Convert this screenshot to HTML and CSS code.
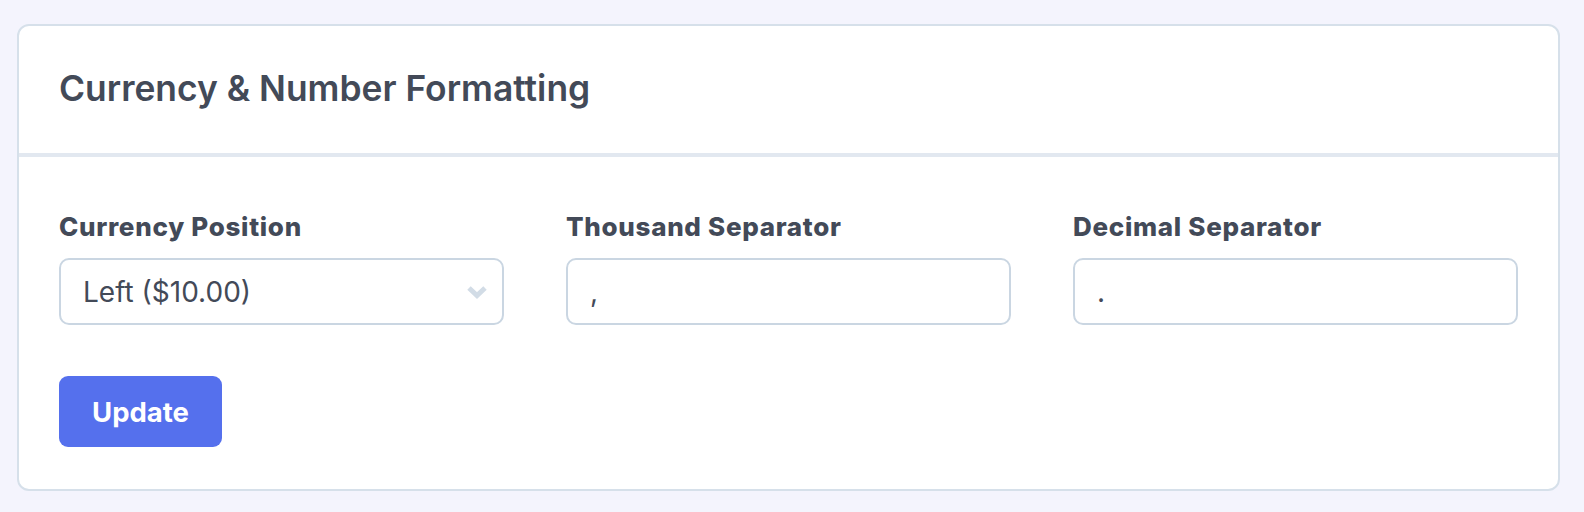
FILE: index.html
```html
<!DOCTYPE html>
<html lang="en">
<head>
<meta charset="utf-8">
<title>Currency &amp; Number Formatting</title>
<link rel="stylesheet" href="styles.css">
</head>
<body>
  <section class="card">
    <header class="card-header">
      <h2 class="card-title">Currency &amp; Number Formatting</h2>
    </header>
    <form class="card-body">
      <div class="fields">
        <div class="field">
          <label class="field-label" for="pos">Currency Position</label>
          <div class="select-wrap">
            <select id="pos" class="control select">
              <option>Left ($10.00)</option>
              <option>Right (10.00$)</option>
            </select>
            <svg class="chevron" viewBox="0 0 22 14" aria-hidden="true">
              <path d="M3 3 L11 10.5 L19 3" fill="none" stroke="currentColor" stroke-width="5" stroke-linecap="butt" stroke-linejoin="miter"/>
            </svg>
          </div>
        </div>
        <div class="field">
          <label class="field-label" for="thou">Thousand Separator</label>
          <input id="thou" class="control" type="text" value=",">
        </div>
        <div class="field">
          <label class="field-label" for="dec">Decimal Separator</label>
          <input id="dec" class="control" type="text" value=".">
        </div>
      </div>
      <div class="actions">
        <button type="button" class="btn-primary">Update</button>
      </div>
    </form>
  </section>
</body>
</html>
```

FILE: styles.css
```css
html, body {
  margin: 0;
  padding: 0;
}

body {
  background: #f4f4fd;
  font-family: Inter, "Noto Sans", "Liberation Sans", sans-serif;
  color: #434a58;
  padding: 24px 24px 0 17px;
}

.card {
  background: #ffffff;
  border: 2px solid #d6e0ea;
  border-radius: 12px;
  overflow: hidden;
}

.card-header {
  padding: 39px 40px 40px 40px;
  border-bottom: 4px solid #e2e8f0;
}

.card-title {
  margin: 0;
  font-size: 35.4px;
  line-height: 48px;
  font-weight: 600;
  color: #434a58;
}

.card-body {
  padding: 54px 40px 42px 40px;
  display: flex;
  flex-direction: column;
  gap: 51px;
}

.fields {
  display: grid;
  grid-template-columns: repeat(3, 1fr);
  column-gap: 62px;
}

.field {
  display: flex;
  flex-direction: column;
  gap: 15px;
}

.field-label {
  font-size: 26px;
  line-height: 32px;
  font-weight: 800;
  letter-spacing: 0.7px;
  color: #434a58;
}

.select-wrap {
  position: relative;
}

.control {
  box-sizing: border-box;
  width: 100%;
  height: 67px;
  border: 2px solid #cad6e2;
  border-radius: 10px;
  background: #ffffff;
  padding: 0 22px;
  font-family: Inter, "Noto Sans", "Liberation Sans", sans-serif;
  font-size: 28px;
  color: #434a58;
  outline: none;
}

.select {
  appearance: none;
  -webkit-appearance: none;
  padding-right: 56px;
}

.chevron {
  position: absolute;
  right: 16px;
  top: 27px;
  width: 22px;
  height: 14px;
  color: #d2dce6;
  pointer-events: none;
}

.actions {
  display: flex;
}

.btn-primary {
  height: 71px;
  padding: 0 33px;
  border: none;
  border-radius: 9px;
  background: #5570ed;
  color: #ffffff;
  font-family: Inter, "Noto Sans", "Liberation Sans", sans-serif;
  font-size: 27.5px;
  font-weight: 700;
  cursor: pointer;
}
```
